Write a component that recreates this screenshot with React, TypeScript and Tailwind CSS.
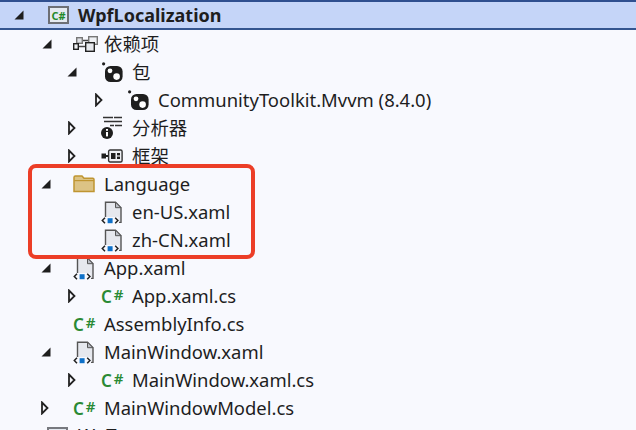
import React from "react";

const Expanded = () => (
  <svg width="10" height="10" viewBox="0 0 10 10"><polygon points="9.5,0.5 9.5,9.5 0.5,9.5" fill="#1e1e1e" /></svg>
);
const Collapsed = () => (
  <svg width="8" height="14" viewBox="0 0 8 14"><polygon points="1,1.5 6.5,7 1,12.5" fill="none" stroke="#222" strokeWidth="1.8" /></svg>
);

const Deps = () => (
  <svg width="25" height="16" viewBox="0 0 25 16" fill="#eef0f4" strokeWidth="1.4">
    <path d="M9 4.5h8M5 10.5h9" fill="none" stroke="#444" />
    <rect x="3.7" y="1.7" width="5.6" height="5.6" fill="#dfe1e6" stroke="#777" />
    <rect x="0.7" y="7.7" width="4.6" height="5.6" fill="#eef0f4" stroke="#222" />
    <rect x="15.7" y="0.7" width="8.6" height="7.6" fill="#eef0f4" stroke="#777" />
    <rect x="12.7" y="6.7" width="8.6" height="8.6" fill="#e6e8ed" stroke="#222" />
  </svg>
);
const Pkg = () => (
  <svg width="22" height="20" viewBox="0 0 22 20">
    <circle cx="2.6" cy="1.8" r="1.6" fill="#1e1e1e" />
    <rect x="4" y="4" width="17.6" height="16" rx="5.5" fill="#1e1e1e" />
    <circle cx="9" cy="8.8" r="2.4" fill="#fff" />
    <circle cx="15.6" cy="14.6" r="3.3" fill="#fff" />
  </svg>
);
const Analyzer = () => (
  <svg width="22" height="24" viewBox="0 0 22 24">
    <path d="M2 1.5h10M13 1.5h8M3 5.5h18M9 9.5h4M14 9.5h7" stroke="#333" strokeWidth="1.3" fill="none" />
    <circle cx="6" cy="17" r="6" fill="#1e1e1e" />
    <rect x="5" y="16" width="2" height="4.4" fill="#fff" />
    <rect x="5" y="13" width="2" height="1.8" fill="#fff" />
  </svg>
);
const Framework = () => (
  <svg width="22" height="14" viewBox="0 0 22 14">
    <rect x="0.5" y="4.5" width="4.5" height="5" fill="#1e1e1e" />
    <rect x="4.5" y="6" width="3.5" height="2" fill="#1e1e1e" />
    <rect x="7.6" y="1" width="13.5" height="12" rx="1.5" fill="#eef0f4" stroke="#333" strokeWidth="1.4" />
    <rect x="10" y="4" width="4.5" height="6" fill="#1e1e1e" />
    <rect x="16" y="4" width="3" height="2.4" fill="#1e1e1e" />
    <rect x="16" y="7.6" width="3" height="2.4" fill="#1e1e1e" />
  </svg>
);
const Folder = () => (
  <svg width="22" height="18" viewBox="0 0 22 18">
    <path d="M1 16.6V2.4Q1 1 2.4 1H9l2 2.2h8.8q1.2 0 1.2 1.2v12.2z" fill="#dcc385" stroke="#bf9531" strokeWidth="1.5" />
    <path d="M1.2 5.6H21" stroke="#bf9531" strokeWidth="1.2" />
  </svg>
);
const Xaml = () => (
  <svg width="22" height="23" viewBox="0 0 22 23">
    <path d="M4.5 16V1h10l5.5 5.5V20H17.5V16z" fill="#e6e8ee" />
    <path d="M4.5 16V1.2h10l5.5 5.5V21.4H18" fill="none" stroke="#555" strokeWidth="1.4" />
    <path d="M14.5 1.2v5.5H20z" fill="#b9bcc4" stroke="#555" strokeWidth="1" />
    <path d="M4 16.8l-2.7 2.7L4 22.2M14.2 16.8l2.7 2.7-2.7 2.7" fill="none" stroke="#222" strokeWidth="1.5" />
    <rect x="6.6" y="17.2" width="5" height="5" fill="#0e70c8" />
  </svg>
);
const Cs = () => (
  <span className="flex w-[24px] items-center font-['Noto_Sans',sans-serif] leading-none text-[#2a8a34]">
    <span className="text-[17px] font-semibold">C</span>
    <span className="mb-[4px] ml-[2px] text-[15px] font-semibold">#</span>
  </span>
);

type RowProps = {
  pl: string;
  arrow?: "e" | "c";
  gap: string;
  icon: React.ReactNode;
  text: string;
};

const Row = ({ pl, arrow, gap, icon, text }: RowProps) => (
  <div className={`flex h-[28px] shrink-0 items-center ${pl}`}>
    <span className={`flex items-center ${gap}`}>
      {arrow === "e" && <Expanded />}
      {arrow === "c" && <Collapsed />}
    </span>
    <span className="flex w-[31px] items-center">{icon}</span>
    <span className="whitespace-nowrap">{text}</span>
  </div>
);

export default function App() {
  return (
    <div className="relative h-[430px] w-[636px] overflow-hidden bg-[#f8f9fe] font-['Noto_Sans','Noto_Sans_CJK_SC',sans-serif] text-[18.45px] text-[#1e1e1e]">
      <div className="flex h-[30px] items-center border-t-2 border-b-2 border-t-[#2f4f8f] border-b-[#34558f] bg-[#c5d5f8] pl-[14px] text-[18px]">
        <span className="flex w-[34px] items-center"><Expanded /></span>
        <span className="flex h-[18px] w-[21px] items-center justify-center border-2 border-[#6d6f75] bg-[#e4e9f0] font-['Noto_Sans',sans-serif] text-[11px] leading-none font-bold text-[#1f8a2a]">C#</span>
        <span className="ml-[9px] font-bold">WpfLocalization</span>
      </div>
      <div className="flex flex-col">
        <Row pl="pl-[42px]" arrow="e" gap="w-[31px]" icon={<Deps />} text="依赖项" />
        <Row pl="pl-[67px]" arrow="e" gap="w-[34px]" icon={<Pkg />} text="包" />
        <Row pl="pl-[95px]" arrow="c" gap="w-[32px]" icon={<Pkg />} text="CommunityToolkit.Mvvm (8.4.0)" />
        <Row pl="pl-[68px]" arrow="c" gap="w-[33px]" icon={<Analyzer />} text="分析器" />
        <Row pl="pl-[68px]" arrow="c" gap="w-[33px]" icon={<Framework />} text="框架" />
        <Row pl="pl-[41px]" arrow="e" gap="w-[32px]" icon={<Folder />} text="Language" />
        <Row pl="pl-[68px]" gap="w-[33px]" icon={<Xaml />} text="en-US.xaml" />
        <Row pl="pl-[68px]" gap="w-[33px]" icon={<Xaml />} text="zh-CN.xaml" />
        <Row pl="pl-[41px]" arrow="e" gap="w-[32px]" icon={<Xaml />} text="App.xaml" />
        <Row pl="pl-[68px]" arrow="c" gap="w-[33px]" icon={<Cs />} text="App.xaml.cs" />
        <Row pl="pl-[41px]" gap="w-[32px]" icon={<Cs />} text="AssemblyInfo.cs" />
        <Row pl="pl-[41px]" arrow="e" gap="w-[32px]" icon={<Xaml />} text="MainWindow.xaml" />
        <Row pl="pl-[68px]" arrow="c" gap="w-[33px]" icon={<Cs />} text="MainWindow.xaml.cs" />
        <Row pl="pl-[41px]" arrow="c" gap="w-[32px]" icon={<Cs />} text="MainWindowModel.cs" />
        <div className="flex items-start pl-[47px]">
          <div className="mt-[5px] h-[18px] w-[21px] border-2 border-[#77797f] bg-[#e4e9f0]" />
          <span className="ml-[10px] -mt-[1px] leading-[28px] whitespace-nowrap">WnT</span>
        </div>
      </div>
      <div className="absolute left-[28px] top-[164px] h-[95px] w-[227px] rounded-[8px] border-4 border-[#ec3e27]" />
    </div>
  );
}
